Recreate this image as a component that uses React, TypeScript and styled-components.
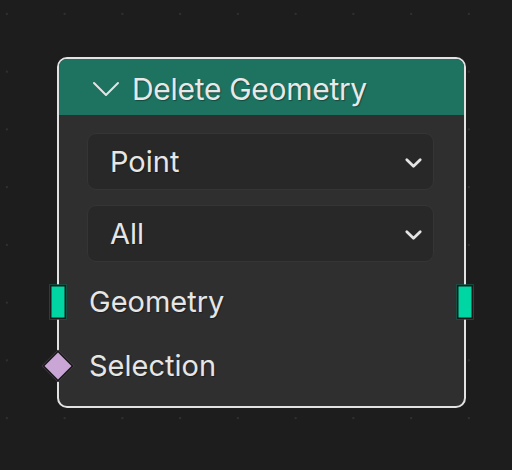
import styled, { createGlobalStyle } from "styled-components";

const GlobalStyle = createGlobalStyle`
  html, body {
    margin: 0;
    padding: 0;
    background: #1d1d1d;
  }
  body {
    font-family: Inter, "Noto Sans", sans-serif;
  }
`;

interface ISocket {
  shape: "bar" | "diamond";
  color: string;
}

const Chevron = ({ w, h, stroke }: { w: number; h: number; stroke: number }) => (
  <svg width={w} height={h} viewBox={`0 0 ${w} ${h}`}>
    <polyline
      points={`${stroke},${stroke} ${w / 2},${h - stroke} ${w - stroke},${stroke}`}
      fill="none"
      stroke="#e4e4e4"
      strokeWidth={stroke}
      strokeLinecap="round"
      strokeLinejoin="round"
    />
  </svg>
);

const Socket = ({ shape, color }: ISocket) =>
  shape === "bar" ? <Bar color={color} /> : <Diamond color={color} />;

export default function App() {
  return (
    <Canvas>
      <GlobalStyle />
      <Node>
        <Header>
          <Chevron w={28} h={16} stroke={2} />
          <Title>Delete Geometry</Title>
        </Header>
        <Body>
          <Select>
            <SelectText>Point</SelectText>
            <Chevron w={19} h={12} stroke={2.8} />
          </Select>
          <Select>
            <SelectText>All</SelectText>
            <Chevron w={19} h={12} stroke={2.8} />
          </Select>
          <Row>
            <SocketLeft>
              <Socket shape="bar" color="#00d6a3" />
            </SocketLeft>
            <Label>Geometry</Label>
            <SocketRight>
              <Socket shape="bar" color="#00d6a3" />
            </SocketRight>
          </Row>
          <Row>
            <SocketLeft>
              <Socket shape="diamond" color="#c9a6d6" />
            </SocketLeft>
            <Label>Selection</Label>
          </Row>
        </Body>
      </Node>
    </Canvas>
  );
}

const Canvas = styled.div`
  width: 512px;
  height: 470px;
  box-sizing: border-box;
  padding: 57px 0 0 57px;
  background-color: #1d1d1d;
  background-image: radial-gradient(circle, #303030 0.9px, transparent 1.2px);
  background-size: 57.75px 57.75px;
  background-position: -22px -15px;
  overflow: hidden;
`;

const Node = styled.div`
  box-sizing: border-box;
  width: 409px;
  height: 351px;
  border: 2px solid #e2e2e2;
  border-radius: 10px;
  background: #2f2f2f;
  display: flex;
  flex-direction: column;
`;

const Header = styled.div`
  height: 56px;
  background: #1e7260;
  border-radius: 8px 8px 0 0;
  display: flex;
  align-items: center;
  gap: 12px;
  padding-left: 33px;
  padding-top: 3px;
  box-sizing: border-box;
  flex-shrink: 0;
`;

const Title = styled.div`
  color: #e8e8e8;
  font-size: 30px;
  letter-spacing: -0.3px;
  text-shadow: 1px 1px 1px rgba(0, 0, 0, 0.35);
`;

const Body = styled.div`
  display: flex;
  flex-direction: column;
  padding: 18px 30px 0 28px;
  gap: 15px;
`;

const Select = styled.div`
  box-sizing: border-box;
  height: 57px;
  background: #282828;
  border: 1px solid #353535;
  border-radius: 9px;
  display: flex;
  align-items: center;
  justify-content: space-between;
  padding: 2px 10px 0 22px;
`;

const SelectText = styled.span`
  color: #e6e6e6;
  font-size: 29px;
  margin-top: -2px;
  text-shadow: 1px 1px 1px rgba(0, 0, 0, 0.35);
`;

const Row = styled.div`
  position: relative;
  height: 49px;
  display: flex;
  align-items: center;
  margin-left: -28px;
  margin-right: -30px;
  padding-left: 30px;
`;

const Label = styled.span`
  color: #e6e6e6;
  font-size: 29px;
  text-shadow: 1px 1px 1px rgba(0, 0, 0, 0.35);
`;

const SocketLeft = styled.div`
  position: absolute;
  left: -1px;
  top: 50%;
  transform: translate(-50%, -50%);
  display: flex;
`;

const SocketRight = styled.div`
  position: absolute;
  right: -1px;
  top: 50%;
  transform: translate(50%, -50%);
  display: flex;
`;

const Bar = styled.div<{ color: string }>`
  box-sizing: border-box;
  width: 17px;
  height: 35px;
  background: ${({ color }) => color};
  border: 2px solid #1a1a1a;
`;

const Diamond = styled.div<{ color: string }>`
  box-sizing: border-box;
  width: 23px;
  height: 23px;
  background: ${({ color }) => color};
  border: 2px solid #1a1a1a;
  transform: rotate(45deg);
  margin: 4px;
`;
